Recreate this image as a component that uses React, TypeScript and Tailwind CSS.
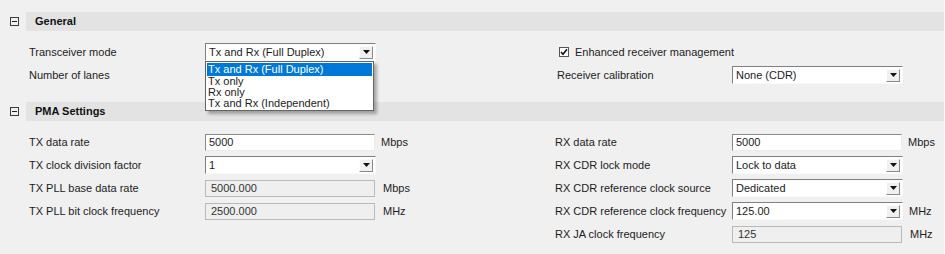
import React from "react";

type Row = {
  label: string;
  kind: "combo" | "text" | "disabled" | "check" | "none";
  value?: string;
  unit?: string;
};

const GENERAL_LEFT: Row[] = [
  { label: "Transceiver mode", kind: "combo", value: "Tx and Rx (Full Duplex)" },
  { label: "Number of lanes", kind: "none" },
];

const GENERAL_RIGHT: Row[] = [
  { label: "Enhanced receiver management", kind: "check" },
  { label: "Receiver calibration", kind: "combo", value: "None (CDR)" },
];

const PMA_LEFT: Row[] = [
  { label: "TX data rate", kind: "text", value: "5000", unit: "Mbps" },
  { label: "TX clock division factor", kind: "combo", value: "1" },
  { label: "TX PLL base data rate", kind: "disabled", value: "5000.000", unit: "Mbps" },
  { label: "TX PLL bit clock frequency", kind: "disabled", value: "2500.000", unit: "MHz" },
];

const PMA_RIGHT: Row[] = [
  { label: "RX data rate", kind: "text", value: "5000", unit: "Mbps" },
  { label: "RX CDR lock mode", kind: "combo", value: "Lock to data" },
  { label: "RX CDR reference clock source", kind: "combo", value: "Dedicated" },
  { label: "RX CDR reference clock frequency", kind: "combo", value: "125.00", unit: "MHz" },
  { label: "RX JA clock frequency", kind: "disabled", value: "125", unit: "MHz" },
];

const MODES = [
  "Tx and Rx (Full Duplex)",
  "Tx only",
  "Rx only",
  "Tx and Rx (Independent)",
];

function SectionHeader({ title }: { title: string }) {
  return (
    <div className="flex h-[19px] items-center">
      <div className="flex w-[26px] justify-center pl-[2px]">
        <div className="flex h-[9px] w-[9px] items-center justify-center border border-[#3c3c3c] bg-[#f0f0f0]">
          <div className="h-px w-[5px] bg-[#222]" />
        </div>
      </div>
      <div className="flex h-full flex-1 items-center bg-[#e3e3e3] pl-[9px] font-bold text-[#111]">
        {title}
      </div>
    </div>
  );
}

function Combo({ value }: { value: string }) {
  return (
    <div className="flex h-[18px] w-[171px] items-center border border-t-[#7f7f7f] border-l-[#7f7f7f] border-b-[#fafafa] border-r-[#fafafa] bg-white">
      <span className="flex-1 truncate pl-[3px]">{value}</span>
      <div className="mr-[2px] flex h-[13px] w-[14px] items-center justify-center border border-t-[#fdfdfd] border-l-[#fdfdfd] border-b-[#8a8a8a] border-r-[#8a8a8a] bg-[#f0f0f0]">
        <svg width="7" height="4" viewBox="0 0 7 4">
          <path d="M0 0 H7 L3.5 4 Z" fill="#111" />
        </svg>
      </div>
    </div>
  );
}

function Field({ row }: { row: Row }) {
  if (row.kind === "combo") return <Combo value={row.value!} />;
  if (row.kind === "text")
    return (
      <div className="flex h-[17px] w-[170px] items-center border border-t-[#8a8a8a] border-l-[#8a8a8a] border-b-[#ececec] border-r-[#ececec] bg-white pl-[3px]">
        {row.value}
      </div>
    );
  if (row.kind === "disabled")
    return (
      <div className="flex h-[17px] w-[170px] items-center border border-[#b9b9b9] bg-[#efefef] pl-[5px] text-[#333]">
        {row.value}
      </div>
    );
  return null;
}

function Column({ rows, labelW }: { rows: Row[]; labelW: number }) {
  return (
    <div className="flex flex-col gap-[5px]">
      {rows.map((r) =>
        r.kind === "check" ? (
          <div key={r.label} className="flex h-[18px] items-center gap-[6px] pl-[2px]">
            <div className="flex h-[10px] w-[10px] items-center justify-center border border-[#555] bg-white">
              <svg width="8" height="8" viewBox="0 0 8 8">
                <path d="M1 4 L3 6.2 L7 1.2" stroke="#111" strokeWidth="1.6" fill="none" />
              </svg>
            </div>
            <span>{r.label}</span>
          </div>
        ) : (
          <div key={r.label} className="flex h-[18px] items-center">
            <span style={{ width: labelW }} className="shrink-0">
              {r.label}
            </span>
            <Field row={r} />
            {r.unit && (
              <span className={r.kind === "disabled" ? "pl-[8px]" : "pl-[6px]"}>{r.unit}</span>
            )}
          </div>
        )
      )}
    </div>
  );
}

export default function App() {
  return (
    <div className="relative h-[254px] w-[945px] overflow-hidden border-r border-r-[#fbfbfb] bg-[#f0f0f0] pt-[12px] font-['Liberation_Sans',Arial,sans-serif] text-[11px] leading-none text-[#1c1c1c]">
      <SectionHeader title="General" />

      {/* General */}
      <div className="flex pb-[18px] pt-[12px]">
        <div className="relative w-[557px] pl-[29px]">
          <Column rows={GENERAL_LEFT} labelW={176} />
          {/* open dropdown list */}
          <div className="absolute left-[205px] top-[18px] z-10 w-[169px] border border-[#646464] bg-white py-px shadow-[3px_3px_3px_rgba(0,0,0,0.3)]">
            {MODES.map((m, i) => (
              <div
                key={m}
                className={`mx-px flex items-center pl-[1px] ${
                  i === 0 ? "h-[13px] bg-[#0078d7] text-white" : "h-[11px]"
                }`}
              >
                {m}
              </div>
            ))}
          </div>
        </div>
        <Column rows={GENERAL_RIGHT} labelW={175} />
      </div>

      <SectionHeader title="PMA Settings" />

      {/* PMA Settings */}
      <div className="flex pt-[12px]">
        <div className="w-[555px] pl-[29px]">
          <Column rows={PMA_LEFT} labelW={176} />
        </div>
        <Column rows={PMA_RIGHT} labelW={177} />
      </div>
    </div>
  );
}
